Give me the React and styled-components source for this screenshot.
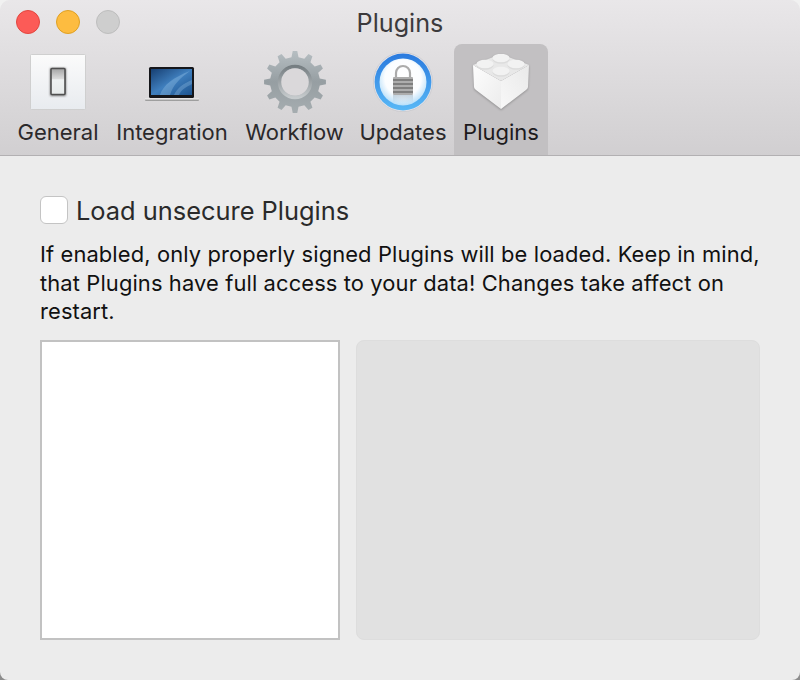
import React from "react";
import styled, { createGlobalStyle } from "styled-components";

const Global = createGlobalStyle`
  html, body { margin: 0; padding: 0; }
  body {
    font-family: Inter, "Liberation Sans", Arial, sans-serif;
    background: linear-gradient(#f1f1f1 50%, #8c8c8c 50%);
    width: 800px;
    height: 680px;
    overflow: hidden;
  }
`;

const Window = styled.div`
  width: 800px;
  height: 680px;
  background: #ececec;
  border-radius: 10px 10px 8px 8px;
  overflow: hidden;
  display: flex;
  flex-direction: column;
`;

const Header = styled.header`
  height: 155px;
  box-sizing: content-box;
  border-bottom: 1px solid #b2b0b2;
  background: linear-gradient(#e9e7e9, #d1cfd1);
  display: flex;
  flex-direction: column;
`;

const TitleBar = styled.div`
  height: 44px;
  position: relative;
  display: flex;
  align-items: center;
  justify-content: center;
  padding-top: 2px;
  box-sizing: border-box;
`;

const Lights = styled.div`
  position: absolute;
  left: 16px;
  top: 10px;
  display: flex;
  gap: 16px;
`;

const Light = styled.span`
  width: 24px;
  height: 24px;
  box-sizing: border-box;
  border-radius: 50%;
  background: ${(p) => p.$bg};
  border: 1px solid ${(p) => p.$edge};
`;

const Title = styled.h1`
  margin: 0;
  font-size: 25.2px;
  line-height: 30px;
  font-weight: 400;
  color: #3c3a3c;
`;

const Toolbar = styled.nav`
  flex: 1;
  display: flex;
  padding-left: 9px;
`;

const Tab = styled.div`
  width: ${(p) => p.$w}px;
  height: 111px;
  display: flex;
  flex-direction: column;
  align-items: center;
  border-radius: 8px 8px 0 0;
  background: ${(p) => (p.$active ? "#c2c0c2" : "transparent")};
`;

const IconSlot = styled.div`
  height: 76px;
  width: 100%;
  display: flex;
  align-items: center;
  justify-content: center;
  flex: none;
`;

const TabLabel = styled.span`
  font-size: 22px;
  line-height: 24px;
  color: ${(p) => (p.$active ? "#1c1a1c" : "#2b292b")};
  white-space: nowrap;
`;

const Content = styled.main`
  flex: 1;
  padding: 40px;
  display: flex;
  flex-direction: column;
`;

const CheckRow = styled.label`
  display: flex;
  align-items: center;
  gap: 8px;
  height: 28px;
`;

const CheckBox = styled.span`
  width: 28px;
  height: 28px;
  box-sizing: border-box;
  background: #fff;
  border: 1px solid #c4c4c4;
  border-radius: 6px;
`;

const CheckLabel = styled.span`
  font-size: 25.4px;
  color: #2a2a2a;
  white-space: nowrap;
`;

const Help = styled.p`
  margin: 16px 0 14.5px;
  font-size: 21.9px;
  letter-spacing: 0.12px;
  line-height: 28.5px;
  color: #111;
  width: 730px;
`;

const Panels = styled.div`
  display: flex;
  gap: 16px;
  height: 300px;
`;

const ListPanel = styled.div`
  width: 300px;
  box-sizing: border-box;
  background: #fff;
  border: 2px solid #c2c2c2;
`;

const DetailPanel = styled.div`
  flex: 1;
  box-sizing: border-box;
  background: #e1e1e1;
  border: 1px solid #dddddd;
  border-radius: 8px;
`;

const BrickSvg = styled.svg`
  filter: drop-shadow(0 1px 1px rgba(0, 0, 0, 0.25));
`;

const SwitchIcon = () => (
  <svg width="56" height="56" viewBox="0 0 56 56">
    <defs>
      <linearGradient id="plate" x1="0" y1="0" x2="0" y2="1">
        <stop offset="0" stopColor="#fbfbfb" />
        <stop offset="1" stopColor="#e8ebef" />
      </linearGradient>
      <linearGradient id="rocker" x1="0" y1="0" x2="0" y2="1">
        <stop offset="0" stopColor="#a4a4a4" />
        <stop offset="0.4" stopColor="#dcdcdc" />
        <stop offset="0.43" stopColor="#eef1f1" />
        <stop offset="1" stopColor="#e6eaea" />
      </linearGradient>
      <filter id="soft" x="-30%" y="-30%" width="160%" height="160%">
        <feGaussianBlur stdDeviation="1" />
      </filter>
    </defs>
    <rect x="0.5" y="0.5" width="55" height="55" rx="1" fill="url(#plate)" stroke="#cfcfcf" />
    <rect x="20" y="14" width="16" height="28" rx="1" fill="#777" filter="url(#soft)" />
    <rect x="21" y="14.5" width="14" height="26" rx="1" fill="url(#rocker)" stroke="#4f4f4f" strokeWidth="1.6" />
  </svg>
);

const LaptopIcon = () => (
  <svg width="56" height="38" viewBox="0 0 56 38">
    <defs>
      <linearGradient id="screen" x1="0" y1="0" x2="1" y2="1">
        <stop offset="0" stopColor="#173f72" />
        <stop offset="0.5" stopColor="#3f7fbe" />
        <stop offset="1" stopColor="#1d5490" />
      </linearGradient>
      <linearGradient id="base" x1="0" y1="0" x2="0" y2="1">
        <stop offset="0" stopColor="#efefef" />
        <stop offset="1" stopColor="#8a8a8a" />
      </linearGradient>
    </defs>
    <rect x="5" y="4" width="45" height="31" rx="1.5" fill="#15161a" />
    <rect x="7" y="6" width="41" height="26" fill="url(#screen)" />
    <path d="M16 32C19 22 30 14 46 8C36 15 29 22 26 32Z" fill="#a9cff0" opacity=".3" />
    <path d="M30 32C33 25 40 20 48 17V21C42 24 37 27 35 32Z" fill="#a9cff0" opacity=".28" />
    <path d="M1 35.5H55V37Q55 38 54 38H2Q1 38 1 37Z" fill="url(#base)" />
  </svg>
);

const gearPath = (cx, cy, outer, inner, teeth) => {
  const pts = [];
  const step = (Math.PI * 2) / teeth;
  for (let i = 0; i < teeth; i++) {
    const a = i * step - Math.PI / 2;
    const at = (r, o) => `${(cx + r * Math.cos(a + o)).toFixed(2)} ${(cy + r * Math.sin(a + o)).toFixed(2)}`;
    pts.push(at(inner, -step * 0.27), at(outer, -step * 0.14), at(outer, step * 0.14), at(inner, step * 0.27));
  }
  return `M${pts.join("L")}Z`;
};

const GearIcon = () => (
  <svg width="64" height="64" viewBox="0 0 64 64">
    <defs>
      <linearGradient id="gear" x1="0" y1="0" x2="0" y2="1">
        <stop offset="0" stopColor="#b6bec2" />
        <stop offset="0.5" stopColor="#969ea2" />
        <stop offset="1" stopColor="#a6adb0" />
      </linearGradient>
      <linearGradient id="ring" x1="0" y1="0" x2="0" y2="1">
        <stop offset="0" stopColor="#767e82" />
        <stop offset="1" stopColor="#c6cbcd" />
      </linearGradient>
    </defs>
    <path d={gearPath(32, 32, 31, 25, 12)} fill="url(#gear)" />
    <circle cx="32" cy="32" r="15.5" fill="none" stroke="url(#ring)" strokeWidth="3.5" />
    <circle cx="32" cy="32" r="13.8" fill="#dad8da" />
  </svg>
);

const LockIcon = () => (
  <svg width="60" height="60" viewBox="0 0 60 60">
    <defs>
      <linearGradient id="blue" x1="0" y1="0" x2="0" y2="1">
        <stop offset="0" stopColor="#2a7ade" />
        <stop offset="1" stopColor="#58b8f6" />
      </linearGradient>
      <radialGradient id="well" cx="0.5" cy="0.42" r="0.62">
        <stop offset="0" stopColor="#ffffff" />
        <stop offset="0.62" stopColor="#fbfdff" />
        <stop offset="1" stopColor="#a8d8f8" />
      </radialGradient>
      <linearGradient id="fade" x1="0" y1="0" x2="0" y2="1">
        <stop offset="0" stopColor="#9db4c6" stopOpacity=".55" />
        <stop offset="1" stopColor="#9db4c6" stopOpacity="0" />
      </linearGradient>
    </defs>
    <circle cx="30" cy="30" r="29.6" fill="#e4e4ea" stroke="#c2c2c6" strokeWidth=".6" />
    <circle cx="30" cy="30" r="28.4" fill="url(#blue)" />
    <circle cx="30" cy="30" r="23.5" fill="url(#well)" />
    <rect x="20" y="43" width="20" height="8" fill="url(#fade)" />
    <path d="M23 25V21a7 7 0 0 1 14 0V25" fill="none" stroke="#ababab" strokeWidth="2.2" />
    <rect x="20" y="25" width="20" height="18" rx="1" fill="#adadad" />
    <path d="M20 28H40M20 32H40M20 36H40M20 40H40" stroke="#7f7f7f" strokeWidth="1.8" />
  </svg>
);

const BrickIcon = () => (
  <BrickSvg width="56" height="56" viewBox="0 0 56 56">
    <defs>
      <linearGradient id="left" x1="0" y1="0" x2="1" y2="1">
        <stop offset="0" stopColor="#fdfdfd" />
        <stop offset="1" stopColor="#ececec" />
      </linearGradient>
      <linearGradient id="right" x1="1" y1="0" x2="0" y2="1">
        <stop offset="0" stopColor="#e9e9e9" />
        <stop offset="1" stopColor="#f8f8f8" />
      </linearGradient>
    </defs>
    <path d="M0 11L28 27V55L3 36Q1 34.5 1 33Z" fill="url(#left)" />
    <path d="M56 11L28 27V55L53 36Q55 34.5 55 33Z" fill="url(#right)" />
    <path d="M0 11L28 0L56 11L28 27Z" fill="#e8e8e8" />
    {[
      [28, 4],
      [12, 10],
      [43, 10],
      [28, 17],
    ].map(([x, y]) => (
      <g key={`${x}-${y}`}>
        <ellipse cx={x} cy={y + 1.5} rx="8.5" ry="4.2" fill="#dcdcdc" />
        <ellipse cx={x} cy={y} rx="8.5" ry="4.2" fill="#f2f2f2" />
      </g>
    ))}
  </BrickSvg>
);

const tabs = [
  { label: "General", w: 98, Icon: SwitchIcon },
  { label: "Integration", w: 130, Icon: LaptopIcon },
  { label: "Workflow", w: 115, Icon: GearIcon },
  { label: "Updates", w: 102, Icon: LockIcon },
  { label: "Plugins", w: 94, Icon: BrickIcon, active: true },
];

export default function App() {
  return (
    <>
      <Global />
      <Window>
        <Header>
          <TitleBar>
            <Lights>
              <Light $bg="#fc5b57" $edge="#e2463f" />
              <Light $bg="#fdbc40" $edge="#dfa023" />
              <Light $bg="#cecece" $edge="#bdbdbd" />
            </Lights>
            <Title>Plugins</Title>
          </TitleBar>
          <Toolbar>
            {tabs.map(({ label, w, Icon, active }) => (
              <Tab key={label} $w={w} $active={active}>
                <IconSlot>
                  <Icon />
                </IconSlot>
                <TabLabel $active={active}>{label}</TabLabel>
              </Tab>
            ))}
          </Toolbar>
        </Header>
        <Content>
          <CheckRow>
            <CheckBox />
            <CheckLabel>Load unsecure Plugins</CheckLabel>
          </CheckRow>
          <Help>
            If enabled, only properly signed Plugins will be loaded. Keep in mind, that Plugins have full access to your data! Changes take affect on restart.
          </Help>
          <Panels>
            <ListPanel />
            <DetailPanel />
          </Panels>
        </Content>
      </Window>
    </>
  );
}
